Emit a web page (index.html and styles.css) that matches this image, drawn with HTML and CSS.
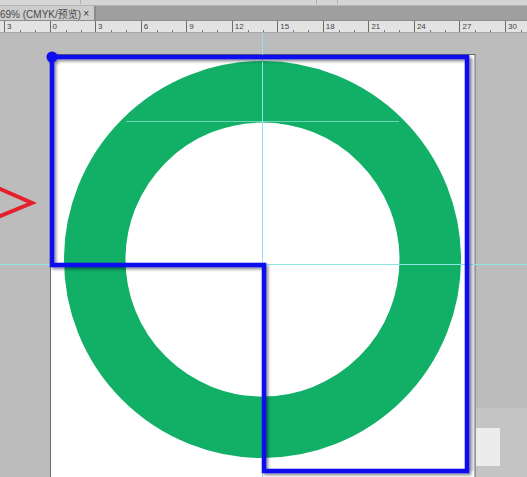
FILE: index.html
```html
<!DOCTYPE html>
<html lang="zh">
<head>
    <meta charset="utf-8">
    <title>69% (CMYK/预览)</title>
    <link rel="stylesheet" href="styles.css">
</head>
<body>
<div class="app">
    <div class="toolbar">
        <span class="tool-piece one"></span>
        <span class="tool-piece two"></span>
        <span class="tool-piece three"></span>
    </div>
    <div class="tabbar">
        <div class="tab">
            <span class="tab-title">69% (CMYK/预览)</span>
            <span class="tab-close">×</span>
        </div>
    </div>
    <div class="ruler">
        <div class="mark"><span>3</span></div>
        <div class="mark"><span>0</span></div>
        <div class="mark"><span>3</span></div>
        <div class="mark"><span>6</span></div>
        <div class="mark"><span>9</span></div>
        <div class="mark"><span>12</span></div>
        <div class="mark"><span>15</span></div>
        <div class="mark"><span>18</span></div>
        <div class="mark"><span>21</span></div>
        <div class="mark"><span>24</span></div>
        <div class="mark"><span>27</span></div>
        <div class="mark"><span>30</span></div>
    </div>
    <div class="canvas">
        <svg class="stage" width="527" height="445" viewBox="0 32 527 445">
            <defs>
                <filter id="shadow" x="-5%" y="-5%" width="115%" height="115%">
                    <feDropShadow dx="2" dy="2" stdDeviation="1.6" flood-color="#000" flood-opacity="0.45"/>
                </filter>
            </defs>

            <!-- lighter patch lower right -->
            <rect x="476" y="407" width="51" height="70" fill="#c4c4c4"/>
            <rect x="476" y="427" width="24" height="38" fill="#ececec"/>

            <!-- artboard -->
            <rect x="50.5" y="53.5" width="424.5" height="430" fill="#fff" stroke="#6a6a6a" stroke-width="1"/>
            <rect x="469" y="58" width="5" height="412" fill="#e2e4ee"/>

            <!-- ring -->
            <circle cx="262.5" cy="258.5" r="167.75" fill="none" stroke="#12b067" stroke-width="61.5"/>

            <!-- guides -->
            <line x1="262.5" y1="32" x2="262.5" y2="477" stroke="#8de6e6" stroke-width="1"/>
            <line x1="0" y1="263.5" x2="527" y2="263.5" stroke="#8de6e6" stroke-width="1"/>
            <line x1="126" y1="120.5" x2="399" y2="120.5" stroke="#a8ecec" stroke-width="1" opacity="0.6"/>

            <!-- selected path -->
            <g filter="url(#shadow)">
                <polygon points="52,56 467,56 467,470 264,470 264,264 52,264" fill="none" stroke="#0b0bf0" stroke-width="4.5" stroke-linejoin="miter"/>
                <circle cx="52" cy="56" r="5.5" fill="#0b0bf0"/>
            </g>

            <!-- red pointer -->
            <polyline points="-2,187 32,202 -2,216" fill="none" stroke="#e5202c" stroke-width="4"/>
        </svg>
    </div>
</div>
</body>
</html>
```

FILE: styles.css
```css
body, html {
    margin: 0;
    padding: 0;
    width: 527px;
    height: 477px;
    overflow: hidden;
    background-color: #bcbcbc;
    font-family: "Liberation Sans", "Noto Sans CJK SC", sans-serif;
}

.app {
    display: flex;
    flex-direction: column;
    width: 527px;
    height: 477px;
}

.toolbar {
    height: 5px;
    background-color: #d5d5d5;
    border-bottom: 1px solid #b4b4b4;
    display: flex;
}

.toolbar .tool-piece {
    height: 4px;
    border-right: 1px solid #b0b0b0;
}

.toolbar .one {
    width: 80px;
}

.toolbar .two {
    width: 235px;
}

.toolbar .three {
    width: 20px;
}

.tabbar {
    height: 14px;
    background-color: #9f9f9f;
    display: flex;
    border-bottom: 1px solid #8c8c8c;
}

.tab {
    width: 94px;
    background-color: #cdcdcd;
    border-right: 2px solid #8a8a8a;
    display: flex;
    align-items: center;
    justify-content: space-between;
    overflow: hidden;
}

.tab-title {
    font-size: 10px;
    color: #4a4a4a;
    margin-left: 0;
    white-space: nowrap;
}

.tab-close {
    font-size: 10px;
    color: #333;
    margin-right: 5px;
}

.ruler {
    height: 11px;
    background-color: #e3e3e3;
    border-bottom: 1px solid #a9a9a9;
    display: flex;
    padding-left: 4px;
}

.mark {
    flex: 0 0 45.55px;
    box-sizing: border-box;
    border-left: 1px solid #6b6b6b;
    position: relative;
}

.mark span {
    font-size: 8px;
    color: #444;
    margin-left: 2px;
    line-height: 9px;
    display: block;
    margin-top: 1px;
}

.mark::before,
.mark::after {
    content: "";
    position: absolute;
    bottom: 0;
    width: 1px;
    height: 2px;
    background-color: #777;
}

.mark::before {
    left: 15px;
}

.mark::after {
    left: 30px;
}

.canvas {
    flex: 1;
    background-color: #bcbcbc;
    overflow: hidden;
}

.stage {
    display: block;
}
```
